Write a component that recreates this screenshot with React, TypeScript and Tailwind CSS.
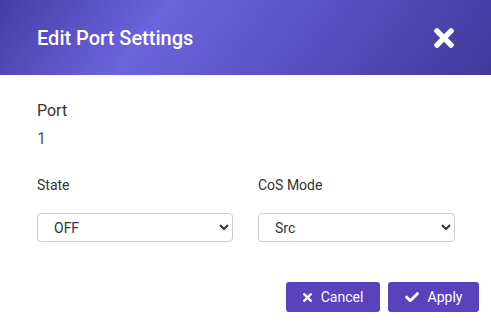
import React from "react";

function TimesIcon({ className }: { className?: string }) {
  return (
    <svg viewBox="0 80 352 352" className={className} fill="currentColor">
      <path d="M242.72 256l100.07-100.07c12.28-12.28 12.28-32.19 0-44.48l-22.24-22.24c-12.28-12.28-32.19-12.28-44.48 0L176 189.28 75.93 89.21c-12.28-12.28-32.19-12.28-44.48 0L9.21 111.45c-12.28 12.28-12.28 32.19 0 44.480L109.28 256 9.21 356.07c-12.28 12.28-12.28 32.19 0 44.48l22.24 22.24c12.28 12.28 32.2 12.28 44.48 0L176 322.72l100.07 100.07c12.28 12.28 32.2 12.28 44.48 0l22.24-22.24c12.28-12.28 12.28-32.19 0-44.48L242.72 256z" />
    </svg>
  );
}

function CheckIcon({ className }: { className?: string }) {
  return (
    <svg viewBox="0 64 512 384" className={className} fill="currentColor">
      <path d="M173.898 439.404l-166.4-166.4c-9.997-9.997-9.997-26.206 0-36.204l36.203-36.204c9.997-9.998 26.207-9.998 36.204 0L192 312.69 432.095 72.596c9.997-9.997 26.207-9.997 36.204 0l36.203 36.204c9.997 9.997 9.997 26.206 0 36.204l-294.4 294.401c-9.998 9.997-26.207 9.997-36.204-.001z" />
    </svg>
  );
}

export default function App() {
  return (
    <div className="w-[491px] h-[322px] bg-white font-['Roboto',sans-serif]">
      {/* Header */}
      <div className="h-[75px] flex items-center justify-between pl-[37px] pr-[37px] bg-[linear-gradient(127deg,#473ca3_0%,#6a64dd_31%,#5a50c4_62%,#43389a_100%)]">
        <h2 className="text-[20px] leading-[24px] font-medium text-white">Edit Port Settings</h2>
        <button className="text-white">
          <TimesIcon className="w-[20px] h-[20px]" />
        </button>
      </div>

      {/* Body */}
      <div className="pl-[37px] pr-[12px] pt-[26px]">
        <div className="text-[16px] leading-[19px] text-[#333]">Port</div>
        <div className="mt-[9px] text-[16px] leading-[19px] text-[#555]">1</div>

        <div className="mt-[29px] grid grid-cols-[196px_197px] gap-x-[25px]">
          <div className="flex flex-col">
            <label className="text-[14px] leading-[16px] text-[#333]">State</label>
            <select
              defaultValue="OFF"
              className="mt-[20px] h-[29px] border border-[#ccc] rounded-[4px] bg-white pl-[12px] text-[14px] text-[#333]"
            >
              <option>OFF</option>
              <option>ON</option>
            </select>
          </div>
          <div className="flex flex-col">
            <label className="text-[14px] leading-[16px] text-[#333]">CoS Mode</label>
            <select
              defaultValue="Src"
              className="mt-[20px] h-[29px] border border-[#ccc] rounded-[4px] bg-white pl-[12px] text-[14px] text-[#333]"
            >
              <option>Src</option>
              <option>Dst</option>
            </select>
          </div>
        </div>

        <div className="mt-[40px] flex justify-end gap-[8px]">
          <button className="w-[94px] h-[30px] flex items-center justify-center gap-[9px] rounded-[3px] bg-[#5a41bd] text-white text-[14px]">
            <TimesIcon className="w-[9px] h-[9px]" />
            Cancel
          </button>
          <button className="w-[91px] h-[30px] flex items-center justify-center gap-[9px] rounded-[3px] bg-[#5a41bd] text-white text-[14px]">
            <CheckIcon className="w-[14px] h-[10.5px]" />
            Apply
          </button>
        </div>
      </div>
    </div>
  );
}
